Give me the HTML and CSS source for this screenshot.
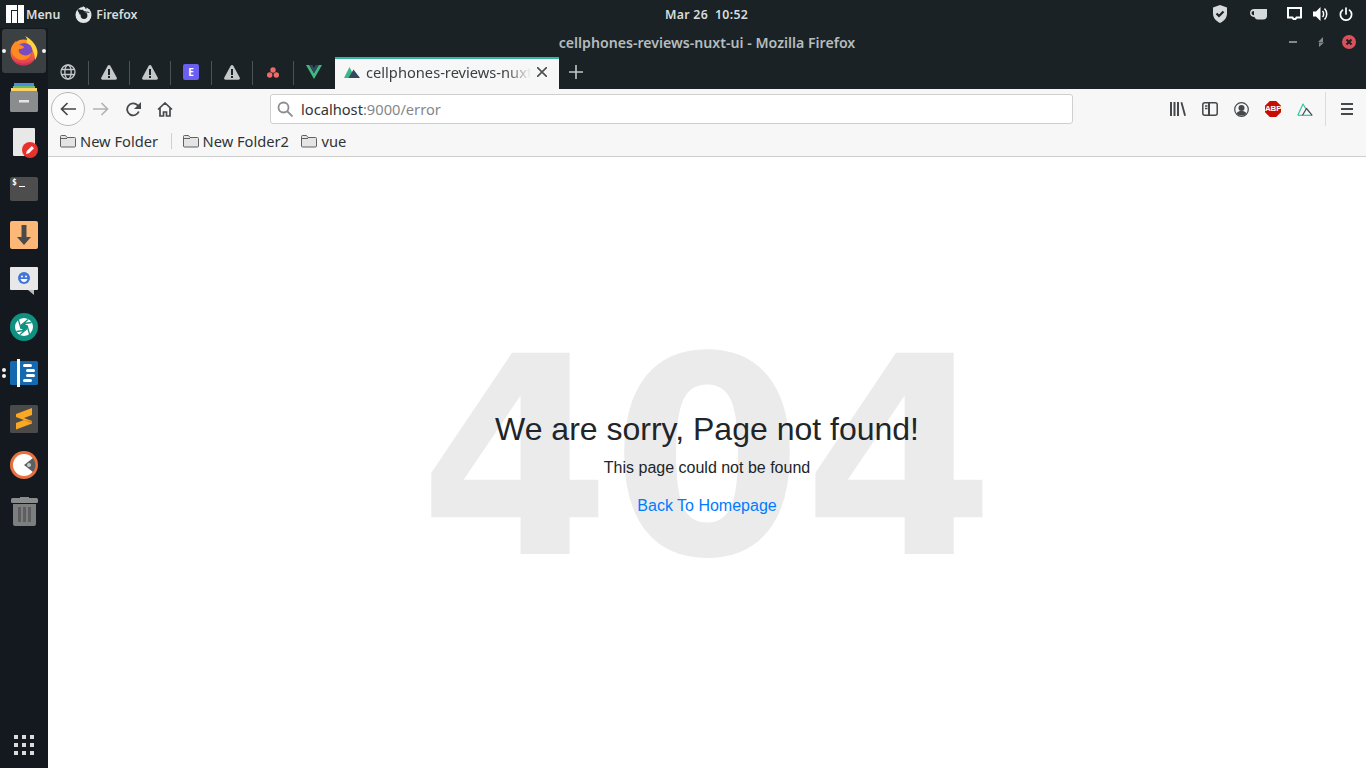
FILE: index.html
```html
<html>

<head>
	<title>
		cellphones-reviews-nuxt-ui - Mozilla Firefox
	</title>

	<link rel="stylesheet" href="styles.css">
</head>

<body>
	<div class="panel">
		<div class="panel-left">
			<svg class="manjaro" width="18" height="18" viewBox="0 0 18 18"><path fill="#fff" d="M0 0h11v5H5v13H0zM6 6h5v12H6zM12 0h6v18h-6z"/></svg>
			<span class="panel-text menu-text">Menu</span>
			<svg class="panel-fox" width="17" height="17" viewBox="0 0 17 17"><circle cx="8.500" cy="9" r="8" fill="#e4e6e6"/><circle cx="9" cy="9.500" r="3.400" fill="#1a2225"/><path fill="#1a2225" d="M2 3l5 1 5-4-1 4 4 3-6-1-4 3z"/><path fill="#e4e6e6" d="M8 0l3 3 2 3-4-1-2-2z"/></svg>
			<span class="panel-text">Firefox</span>
		</div>
		<div class="panel-text clock">Mar 26&nbsp; 10:52</div>
		<div class="panel-right">
			<svg class="tray-shield" width="16" height="18" viewBox="0 0 16 18"><path fill="#d6d9da" d="M8 0l7 2.500v6c0 4.500-3 7.500-7 9.500-4-2-7-5-7-9.500v-6z"/><path fill="none" stroke="#1a2225" stroke-width="2.200" d="M4.500 8.500l2.500 2.500 4.500-4.500"/></svg>
			<svg class="tray-cup" width="17" height="12" viewBox="0 0 17 12"><path fill="#d6d9da" d="M4 1h13v7c0 2-1.500 3.500-3.500 3.500h-6C6 11.500 5 10.500 4.500 9 2 9 0 7.500 0 5s2-4 4-4zm0 2C2.500 3 1.500 3.800 1.500 5S2.500 7.200 4 7.300z"/></svg>
			<svg class="tray-icon" width="15" height="14" viewBox="0 0 15 14"><path fill="none" stroke="#fff" stroke-width="2" d="M1 1h13v9.500H9.500L8.500 12h-2l-1-1.500H1z"/></svg>
			<svg class="tray-icon" width="15" height="14" viewBox="0 0 15 14"><path fill="#fff" d="M0 4.500h3L7.500 0v14L3 9.500H0z"/><path fill="none" stroke="#fff" stroke-width="1.500" d="M9.500 4c1.500 1.500 1.500 4.500 0 6M11.500 1.500c3 3 3 8 0 11"/></svg>
			<svg class="tray-icon" width="14" height="14" viewBox="0 0 14 14"><path fill="none" stroke="#fff" stroke-width="1.700" stroke-linecap="round" d="M7 1v6M3.500 3.200a5.600 5.600 0 1 0 7 0"/></svg>
		</div>
	</div>

	<div class="desktop">
		<div class="dock">
			<div class="dock-item dock-item-active">
				<span class="dot dot-left"></span>
				<svg width="28" height="30" viewBox="0 0 28 30"><defs><linearGradient id="foxBody" x1="0" y1="0" x2="0" y2="1"><stop offset="0" stop-color="#ff9a2e"/><stop offset="0.6" stop-color="#f5603a"/><stop offset="1" stop-color="#e0345a"/></linearGradient></defs><circle cx="13.500" cy="16.500" r="13" fill="url(#foxBody)"/><path fill="#ffd23f" d="M15 0c6 3 12 9 12.500 16 0 3-1 6-2.500 8 0-7-3-13-9-16 2-3 1-6-1-8z"/><circle cx="14.500" cy="15" r="8" fill="#7b4bc4"/><path fill="#ff8a1f" d="M1 13c1-4 3-6 5-8 0 2 1 3 3 4 3 0 4 1 5 2-1 2-3 2-5 2-1 3 1 5 4 6 3 1 7 0 9-3-1 5-5 8-10 8S2 20 1 13z"/><path fill="#c9305c" d="M3 23c4 6 15 6 20 1-4 7-16 7-20-1z"/></svg>
				<span class="dot dot-right"></span>
			</div>
			<div class="dock-item">
				<svg width="28" height="29" viewBox="0 0 28 29"><path fill="#4a90d9" d="M4 0h20v4H4z"/><path fill="#6dbb6a" d="M3 3h22v3H3z"/><path fill="#f6d265" d="M1 5h26v4H1z"/><rect y="8" width="28" height="21" rx="1.500" fill="#8a8c8d"/><rect x="9" y="17" width="10" height="2.500" fill="#e4e4e4"/></svg>
			</div>
			<div class="dock-item">
				<svg width="28" height="30" viewBox="0 0 28 30"><path fill="#e8e8e8" d="M5 1h20a1 1 0 0 1 1 1v26a1 1 0 0 1-1 1H5a1 1 0 0 1-1-1V2a1 1 0 0 1 1-1z" transform="translate(-1 -1)"/><circle cx="20" cy="22" r="8" fill="#e5322e"/><path fill="#fff" d="M16 26l.8-3 5-5 2.200 2.200-5 5z"/></svg>
			</div>
			<div class="dock-item">
				<div class="term-tile"><span class="term-text">$</span><span class="term-cursor"></span></div>
			</div>
			<div class="dock-item">
				<svg width="28" height="28" viewBox="0 0 28 28"><rect width="28" height="28" rx="2" fill="#fdb878"/><path fill="#4a4a4a" d="M11.500 4h5v12h4.500l-7 8-7-8h4.500z"/></svg>
			</div>
			<div class="dock-item">
				<svg width="28" height="28" viewBox="0 0 28 28"><path fill="#e8e8e8" d="M1 0h26a1 1 0 0 1 1 1v21a1 1 0 0 1-1 1H1a1 1 0 0 1-1-1V1a1 1 0 0 1 1-1z"/><path fill="#bcbcbc" d="M18 23h6v5z"/><circle cx="14" cy="11" r="6" fill="#3f76d8"/><circle cx="12" cy="9.500" r="1" fill="#fff"/><circle cx="16" cy="9.500" r="1" fill="#fff"/><path fill="#fff" d="M10.500 12h7c-.5 2-2 3-3.500 3s-3-1-3.500-3z"/></svg>
			</div>
			<div class="dock-item">
				<svg width="28" height="28" viewBox="0 0 28 28"><circle cx="14" cy="14" r="14" fill="#0f9080"/><circle cx="14" cy="14" r="9" fill="#fff"/><path fill="#0f9080" d="M14 10.500l3 1.750v3.500l-3 1.750-3-1.750v-3.500z"/><path stroke="#0f9080" stroke-width="1.300" d="M14 10.500L21.500 9.500M17 12.250L19.500 21M17 15.750L10 21.500M14 17.500L6.500 18.500M11 15.750L8.500 7M11 12.250L18 6.500"/></svg>
			</div>
			<div class="dock-item">
				<span class="dot-stack"><span class="dot"></span><span class="dot"></span></span>
				<svg width="30" height="28" viewBox="0 0 30 28"><rect x="1" y="2" width="28" height="24" rx="1.500" fill="#1569b0"/><rect x="8" y="0" width="3" height="28" fill="#fff"/><rect x="14" y="5" width="9" height="3" rx="1.500" fill="#fff"/><rect x="17" y="10" width="9" height="3" rx="1.500" fill="#fff"/><rect x="17" y="15" width="9" height="3" rx="1.500" fill="#fff"/><rect x="14" y="20" width="9" height="3" rx="1.500" fill="#fff"/></svg>
			</div>
			<div class="dock-item">
				<svg width="28" height="28" viewBox="0 0 28 28"><rect width="28" height="28" rx="1.500" fill="#4a4a4a"/><path fill="#f9a825" d="M6 9l16-6v7l-8 3 8 3v2.500L6 24.500V18l8-3-8-3z"/><path fill="#dd8a14" d="M6 12l8 3 8 1v2.500z"/></svg>
			</div>
			<div class="dock-item">
				<svg width="28" height="28" viewBox="0 0 28 28"><circle cx="14" cy="14" r="14" fill="#e8703f"/><circle cx="14" cy="14" r="11" fill="#fff"/><path fill="#5a5f63" d="M14 14l9-7a11 11 0 0 1 0 14z"/><circle cx="19" cy="14" r="2" fill="#c9ccce"/></svg>
			</div>
			<div class="dock-item">
				<svg width="27" height="29" viewBox="0 0 27 29"><path fill="#8a8c8d" d="M9 0h9v2H9z"/><rect y="1" width="27" height="5" rx="1.500" fill="#8a8c8d"/><path fill="#7c7e7f" d="M2 7h23v20a2 2 0 0 1-2 2H4a2 2 0 0 1-2-2z"/><path fill="#5c5e60" d="M7 10h3v15H7zM12 10h3v15h-3zM17 10h3v15h-3z"/></svg>
			</div>
			<div class="dock-spacer"></div>
			<div class="dock-grid">
				<i></i><i></i><i></i><i></i><i></i><i></i><i></i><i></i><i></i>
			</div>
		</div>

		<div class="browser">
			<div class="titlebar">
				<span class="title-text">cellphones-reviews-nuxt-ui - Mozilla Firefox</span>
				<div class="window-buttons">
					<span class="win-min"></span>
					<svg width="12" height="12" viewBox="0 0 12 12"><path fill="#85898b" d="M8 1v5H3zM4 6.500h5L4 11z"/></svg>
					<svg width="14" height="14" viewBox="0 0 14 14"><circle cx="7" cy="7" r="7" fill="#d9515d"/><path stroke="#1a2225" stroke-width="2" d="M4.500 4.500l5 5M9.500 4.500l-5 5"/></svg>
				</div>
			</div>

			<div class="tabstrip">
				<div class="pin-tab">
					<svg width="16" height="16" viewBox="0 0 16 16" fill="none" stroke="#c4c8c9" stroke-width="1.300"><circle cx="8" cy="8" r="7"/><ellipse cx="8" cy="8" rx="3.200" ry="7"/><path d="M1.500 5.500h13M1.500 10.500h13"/></svg>
				</div>
				<div class="pin-tab">
					<svg width="16" height="15" viewBox="0 0 16 15"><path fill="#c4c8c9" d="M8 0c.6 0 1 .3 1.300.8l6.500 12c.4.800-.2 2-1.200 2H1.400c-1 0-1.600-1.200-1.200-2L6.700.8C7 .3 7.400 0 8 0z"/><path fill="#1a2225" d="M7 4h2v6H7zM7 11h2v2H7z"/></svg>
				</div>
				<div class="pin-tab">
					<svg width="16" height="15" viewBox="0 0 16 15"><path fill="#c4c8c9" d="M8 0c.6 0 1 .3 1.300.8l6.500 12c.4.800-.2 2-1.200 2H1.400c-1 0-1.600-1.200-1.200-2L6.700.8C7 .3 7.400 0 8 0z"/><path fill="#1a2225" d="M7 4h2v6H7zM7 11h2v2H7z"/></svg>
				</div>
				<div class="pin-tab">
					<div class="tile-e">E</div>
				</div>
				<div class="pin-tab">
					<svg width="16" height="15" viewBox="0 0 16 15"><path fill="#c4c8c9" d="M8 0c.6 0 1 .3 1.300.8l6.500 12c.4.800-.2 2-1.200 2H1.400c-1 0-1.600-1.200-1.200-2L6.700.8C7 .3 7.400 0 8 0z"/><path fill="#1a2225" d="M7 4h2v6H7zM7 11h2v2H7z"/></svg>
				</div>
				<div class="pin-tab">
					<svg width="12" height="11" viewBox="0 0 12 11"><circle cx="6" cy="3" r="2.700" fill="#f06a6a"/><circle cx="2.700" cy="8" r="2.700" fill="#f06a6a"/><circle cx="9.300" cy="8" r="2.700" fill="#f06a6a"/></svg>
				</div>
				<div class="pin-tab pin-tab-last">
					<svg width="16" height="14" viewBox="0 0 16 14"><path fill="#41b883" d="M0 0h3.200L8 8.300 12.800 0H16L8 14z"/><path fill="#35495e" d="M3.200 0h3L8 3.100 9.800 0h3L8 8.300z"/></svg>
				</div>
				<div class="active-tab">
					<svg width="16" height="11" viewBox="0 0 16 11"><path fill="#3eb58a" d="M5.500 0L11 11H0z"/><path fill="#35495e" d="M9.500 2.500L16 11H4.500z"/></svg>
					<span class="tab-title">cellphones-reviews-nuxt-ui</span>
					<svg class="tab-close" width="10" height="10" viewBox="0 0 10 10"><path stroke="#4a4f52" stroke-width="1.600" d="M0 0l10 10M10 0L0 10"/></svg>
				</div>
				<svg class="new-tab" width="14" height="14" viewBox="0 0 14 14"><path stroke="#c4c8c9" stroke-width="1.600" d="M7 0v14M0 7h14"/></svg>
			</div>

			<div class="navbar">
				<div class="back-button">
					<svg width="16" height="14" viewBox="0 0 16 14" fill="none" stroke="#45494c" stroke-width="1.700"><path d="M16 7H1.500M7.500 1l-6 6 6 6"/></svg>
				</div>
				<svg class="nav-forward" width="16" height="14" viewBox="0 0 16 14" fill="none" stroke="#b1b3b4" stroke-width="1.700"><path d="M0 7h14.500M8.500 1l6 6-6 6"/></svg>
				<svg class="nav-reload" width="15" height="15" viewBox="0 0 15 15" fill="none" stroke="#45494c" stroke-width="1.800"><path d="M12.800 9.500A6 6 0 1 1 11.500 3.200L13.500 5"/><path fill="#45494c" stroke="none" d="M15 0v7H8z"/></svg>
				<svg class="nav-home" width="16" height="15" viewBox="0 0 16 15" fill="none" stroke="#45494c" stroke-width="1.700"><path d="M1 7.500L8 1l7 6.500M3 6v8h3.500v-4h3v4H13V6"/></svg>
				<div class="urlbar">
					<svg width="16" height="16" viewBox="0 0 16 16" fill="none" stroke="#8b8d8f" stroke-width="1.800"><circle cx="6.500" cy="6.500" r="5"/><path d="M10 10l5.500 5.500"/></svg>
					<span class="url-text">localhost<span class="url-muted">:9000/error</span></span>
				</div>
				<div class="toolbar-right">
					<svg width="16" height="14" viewBox="0 0 16 14"><path fill="#45494c" d="M0 0h2v14H0zM3.500 0h2v14h-2zM7 0h2v14H7zM10.500.500l1.800-.500L16 13.500l-1.800.500z"/></svg>
					<svg width="16" height="14" viewBox="0 0 16 14" fill="none" stroke="#45494c" stroke-width="1.500"><rect x=".8" y=".8" width="14.400" height="12.400" rx="2"/><path stroke-width="2" d="M7 1v12"/><path d="M3 4h2.500M3 6.500h2.500"/></svg>
					<svg width="15" height="15" viewBox="0 0 15 15"><circle cx="7.500" cy="7.500" r="6.800" fill="none" stroke="#45494c" stroke-width="1.200"/><circle cx="7.500" cy="6" r="3" fill="#45494c"/><path fill="#45494c" d="M2.500 11.500c1-2 3-2.500 5-2.500s4 .5 5 2.500c-2.500 2.800-7.500 2.800-10 0z"/></svg>
					<div class="abp-badge">ABP</div>
					<svg width="16" height="13" viewBox="0 0 16 13" fill="none" stroke-width="1.200" stroke-linejoin="round"><path stroke="#2dc9a0" d="M.8 12.300L6 1l3 5"/><path stroke="#2dc9a0" d="M.8 12.300h14.400"/><path stroke="#45494c" d="M5.500 12.300L9.500 5.500l5.700 6.800"/></svg>
				</div>
				<span class="nav-sep"></span>
				<svg class="nav-menu" width="12" height="12" viewBox="0 0 12 12"><path fill="#45494c" d="M0 0h12v2H0zM0 5h12v2H0zM0 10h12v2H0z"/></svg>
			</div>

			<div class="bookmarks">
				<div class="bookmark">
					<svg width="16" height="14" viewBox="0 0 16 14"><path fill="#e4e4e4" stroke="#5f6163" d="M.5 2.500a1 1 0 0 1 1-1h4l1.500 2h7.500a1 1 0 0 1 1 1v7.500a1 1 0 0 1-1 1h-13a1 1 0 0 1-1-1z"/><path fill="none" stroke="#5f6163" d="M.5 4.500H7"/></svg>
					<span>New Folder</span>
				</div>
				<span class="bookmark-sep"></span>
				<div class="bookmark">
					<svg width="16" height="14" viewBox="0 0 16 14"><path fill="#e4e4e4" stroke="#5f6163" d="M.5 2.500a1 1 0 0 1 1-1h4l1.500 2h7.500a1 1 0 0 1 1 1v7.500a1 1 0 0 1-1 1h-13a1 1 0 0 1-1-1z"/><path fill="none" stroke="#5f6163" d="M.5 4.500H7"/></svg>
					<span>New Folder2</span>
				</div>
				<div class="bookmark">
					<svg width="16" height="14" viewBox="0 0 16 14"><path fill="#e4e4e4" stroke="#5f6163" d="M.5 2.500a1 1 0 0 1 1-1h4l1.500 2h7.500a1 1 0 0 1 1 1v7.500a1 1 0 0 1-1 1h-13a1 1 0 0 1-1-1z"/><path fill="none" stroke="#5f6163" d="M.5 4.500H7"/></svg>
					<span>vue</span>
				</div>
			</div>

			<div class="page">
				<div class="error-bg">404</div>
				<div class="error-content">
					<h2 class="error-title">We are sorry, Page not found!</h2>
					<p class="error-text">This page could not be found</p>
					<a class="error-link" href="#">Back To Homepage</a>
				</div>
			</div>
		</div>
	</div>
</body>

</html>
```

FILE: styles.css
```css
html,
body {
	margin: 0px;
	padding: 0px;
	width: 100%;
	height: 100%;
	overflow: hidden;
}

body {
	display: flex;
	flex-direction: column;
	background-color: #1a2225;
	font-family: "Noto Sans", sans-serif;
}

svg {
	display: block;
	flex: none;
}

/* top panel */
.panel {
	display: flex;
	align-items: center;
	flex: none;
	height: 28px;
	padding-right: 13px;
}

.panel-left {
	display: flex;
	align-items: center;
	width: 659px;
	padding-left: 6px;
}

.panel-text {
	color: #d8dcdd;
	font-size: 12.3px;
	font-weight: 600;
	white-space: nowrap;
}

.menu-text {
	margin-left: 2px;
}

.panel-fox {
	margin-left: 15px;
	margin-right: 4px;
}

.clock {
	letter-spacing: 0.3px;
}

.panel-right {
	display: flex;
	align-items: center;
	margin-left: auto;
}

.tray-shield {
	margin-right: 22px;
}

.tray-cup {
	margin-right: 15px;
}

.tray-icon {
	margin-left: 5px;
	margin-right: 6px;
}

.tray-icon:last-child {
	margin-right: 0px;
}

/* dock */
.desktop {
	display: flex;
	flex: 1;
	min-height: 0;
}

.dock {
	display: flex;
	flex-direction: column;
	flex: none;
	width: 48px;
	background-color: #13191e;
}

.dock-item {
	position: relative;
	display: flex;
	align-items: center;
	justify-content: center;
	flex: none;
	height: 46px;
	box-sizing: border-box;
}

.dock-item-active::before {
	content: "";
	position: absolute;
	left: 2px;
	top: 1px;
	width: 44px;
	height: 44px;
	border-radius: 3px;
	background-color: #3b4043;
}

.dock-item svg {
	position: relative;
}

.dot {
	display: block;
	width: 4px;
	height: 4px;
	border-radius: 100%;
	background-color: #f2f2f2;
}

.dot-left,
.dot-right {
	position: absolute;
	z-index: 1;
	top: 21px;
}

.dot-left {
	left: 2px;
}

.dot-right {
	right: 2px;
}

.dot-stack {
	position: absolute;
	left: 2px;
	top: 18px;
	display: flex;
	flex-direction: column;
	gap: 2px;
}

.term-tile {
	display: flex;
	align-items: flex-start;
	width: 28px;
	height: 24px;
	padding: 0px 2px;
	box-sizing: border-box;
	border-radius: 2px;
	background-color: #4d4d4d;
}

.term-text {
	color: #fff;
	font-family: "DejaVu Sans Mono", monospace;
	font-size: 8px;
	font-weight: 700;
	line-height: 12px;
}

.term-cursor {
	width: 6px;
	height: 1px;
	margin-top: 9px;
	margin-left: 2px;
	background-color: #fff;
}

.dock-spacer {
	flex: 1;
}

.dock-grid {
	display: grid;
	grid-template-columns: repeat(3, 4px);
	gap: 4px;
	justify-content: center;
	padding-bottom: 13px;
}

.dock-grid i {
	display: block;
	width: 4px;
	height: 4px;
	background-color: #d8dcdd;
}

/* browser window */
.browser {
	display: flex;
	flex-direction: column;
	flex: 1;
	min-width: 0;
}

.titlebar {
	position: relative;
	display: flex;
	align-items: center;
	justify-content: center;
	flex: none;
	height: 29px;
}

.title-text {
	color: #b5bcbe;
	font-size: 14.15px;
	font-weight: 600;
}

.window-buttons {
	position: absolute;
	right: 10px;
	top: 7px;
	display: flex;
	align-items: center;
	gap: 15px;
}

.win-min {
	width: 8px;
	height: 2px;
	margin-right: 3px;
	background-color: #85898b;
}

.tabstrip {
	display: flex;
	align-items: stretch;
	flex: none;
	height: 32px;
}

.pin-tab {
	position: relative;
	display: flex;
	align-items: center;
	justify-content: center;
	width: 41px;
	padding-right: 1px;
	padding-bottom: 2px;
	box-sizing: border-box;
}

.pin-tab::after {
	content: "";
	position: absolute;
	right: 0px;
	top: 4px;
	width: 1px;
	height: 24px;
	background-color: #4b5255;
}

.pin-tab-last::after {
	display: none;
}

.tile-e {
	width: 16px;
	height: 16px;
	border-radius: 2px;
	background-color: #6a5ff0;
	color: #fff;
	font-size: 10px;
	font-weight: 700;
	line-height: 16px;
	text-align: center;
}

.active-tab {
	display: flex;
	align-items: center;
	width: 224px;
	padding: 0px 12px 4px 9px;
	box-sizing: border-box;
	border-top: 2px solid #35b5a0;
	background-color: #f7f7f7;
}

.tab-title {
	flex: 1;
	min-width: 0;
	margin-left: 6px;
	overflow: hidden;
	color: #3c4043;
	font-size: 14.67px;
	white-space: nowrap;
	-webkit-mask-image: linear-gradient(to right, #000 85%, transparent 100%);
	mask-image: linear-gradient(to right, #000 85%, transparent 100%);
}

.tab-close {
	margin-left: 6px;
}

.new-tab {
	align-self: center;
	margin-left: 10px;
	margin-bottom: 2px;
}

/* toolbar */
.navbar {
	display: flex;
	align-items: center;
	flex: none;
	height: 38px;
	padding-left: 3px;
	padding-top: 2px;
	box-sizing: border-box;
	background-color: #f7f7f7;
}

.back-button {
	display: flex;
	align-items: center;
	justify-content: center;
	flex: none;
	width: 34px;
	height: 34px;
	box-sizing: border-box;
	border: 1px solid #b8b8b8;
	border-radius: 100%;
	background-color: #fbfbfb;
}

.nav-forward {
	margin-left: 8px;
}

.nav-reload {
	margin-left: 17px;
}

.nav-home {
	margin-left: 16px;
}

.urlbar {
	display: flex;
	align-items: center;
	flex: none;
	width: 803px;
	height: 30px;
	margin-left: 97px;
	padding-left: 6px;
	box-sizing: border-box;
	border: 1px solid #cfcfcf;
	border-radius: 3px;
	background-color: #fff;
}

.url-text {
	margin-left: 8px;
	color: #2f3336;
	font-size: 14.67px;
}

.url-muted {
	color: #85888a;
}

.toolbar-right {
	display: flex;
	align-items: center;
	gap: 16px;
	margin-left: 97px;
}

.abp-badge {
	width: 16px;
	height: 16px;
	background-color: #c70d00;
	clip-path: polygon(30% 0%, 70% 0%, 100% 30%, 100% 70%, 70% 100%, 30% 100%, 0% 70%, 0% 30%);
	color: #fff;
	font-family: "Liberation Sans", sans-serif;
	font-size: 8px;
	font-weight: 700;
	letter-spacing: -0.2px;
	line-height: 16px;
	text-align: center;
}

.nav-sep {
	width: 1px;
	height: 34px;
	margin-left: 12px;
	background-color: #dcdcdc;
}

.nav-menu {
	margin-left: 15px;
}

/* bookmarks */
.bookmarks {
	display: flex;
	align-items: center;
	flex: none;
	height: 30px;
	padding-left: 12px;
	padding-bottom: 1px;
	box-sizing: border-box;
	border-bottom: 1px solid #cfcfcf;
	background-color: #f7f7f7;
	color: #2f3336;
	font-size: 14.67px;
}

.bookmark {
	display: flex;
	align-items: center;
	gap: 4px;
	margin-right: 12.5px;
}

.bookmark-sep {
	width: 1px;
	height: 16px;
	margin-right: 11px;
	background-color: #cfcfcf;
}

/* page content */
.page {
	position: relative;
	display: flex;
	align-items: center;
	justify-content: center;
	flex: 1;
	min-height: 0;
	padding-top: 2px;
	overflow: hidden;
	background-color: #fff;
	color: #212529;
	font-family: "Liberation Sans", sans-serif;
}

.error-bg {
	position: absolute;
	left: 0px;
	right: 0px;
	top: 164px;
	color: #ebebeb;
	font-family: "DejaVu Sans", sans-serif;
	font-size: 276px;
	font-weight: 700;
	line-height: 276px;
	text-align: center;
}

.error-content {
	position: relative;
	text-align: center;
}

.error-title {
	margin: 0px 0px 8px;
	font-size: 32px;
	font-weight: 400;
	line-height: 38px;
}

.error-text {
	margin: 0px 0px 14px;
	font-size: 16px;
	line-height: 24px;
}

.error-link {
	color: #007bff;
	font-size: 16px;
	line-height: 24px;
	text-decoration: none;
}
```
